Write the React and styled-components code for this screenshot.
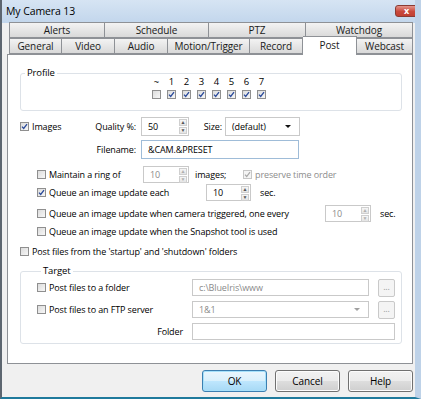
import React from "react";
import styled, { createGlobalStyle } from "styled-components";

const Global = createGlobalStyle`
  html, body { margin: 0; padding: 0; background: #fff; }
  * { box-sizing: border-box; }
  body { font-family: "Open Sans", "Noto Sans", sans-serif; font-size: 9px; letter-spacing: -0.12px; color: #000; }
`;

const Window = styled.div`
  width: 421px;
  height: 399px;
  display: flex;
  flex-direction: column;
  background: #f0f0f0;
  border-left: 2px solid #5d6670;
  border-right: 6px solid #bed2e8;
  border-bottom: 2px solid #1f7a9c;
  overflow: hidden;
`;

const TitleBar = styled.div`
  height: 23px;
  flex: none;
  display: flex;
  align-items: center;
  justify-content: space-between;
  padding: 0 0 1px 4px;
  margin-right: -6px;
  background: linear-gradient(#d6e4f3, #c2d6ec);
  font-size: 10.5px;
  letter-spacing: -0.1px;
`;

const CloseBtn = styled.div`
  width: 23px;
  height: 12px;
  margin-right: 3px;
  border: 1px solid #8a3b33;
  border-radius: 3px;
  background: linear-gradient(#e4948a, #c9493c 55%, #c14032);
  color: #fff;
  font-size: 9px;
  font-weight: bold;
  line-height: 10px;
  text-align: center;
`;

const Body = styled.div`
  flex: 1;
  display: flex;
  flex-direction: column;
  padding: 0 1px 0 5px;
`;

const TabRow = styled.div`
  display: flex;
  height: ${p => p.$h}px;
  padding-left: 2px;
  align-items: flex-end;
  position: relative;
  z-index: ${p => p.$z || 0};
`;

const Tab = styled.div`
  width: ${p => p.$w}px;
  height: ${p => (p.$active ? 19 : 16)}px;
  margin-bottom: ${p => (p.$active ? -1 : 0)}px;
  border: 1px solid #8e9196;
  border-left-width: ${p => (p.$first ? 1 : 0)}px;
  border-bottom: ${p => (p.$active ? "none" : "1px solid #8e9196")};
  background: ${p => (p.$active ? "#fff" : "linear-gradient(#f3f3f3, #e6e6e6 50%, #d9d9d9)")};
  display: flex;
  align-items: center;
  justify-content: center;
  padding-bottom: ${p => (p.$active ? 3 : 0)}px;
  font-size: 10px;
  letter-spacing: -0.1px;
  color: #1a1a1a;
`;

const Panel = styled.div`
  width: 406px;
  height: 310px;
  background: #fff;
  border: 1px solid #8e9196;
  display: flex;
  flex-direction: column;
  padding: 12px 0 0 12px;
`;

const Group = styled.fieldset`
  margin: 0;
  width: 382px;
  border: 1px solid #dde2e8;
  border-radius: 3px;
  padding: ${p => p.$pad};
  min-width: 0;
  height: ${p => p.$h}px;
`;

const Legend = styled.legend`
  padding: 0 2px;
  margin-left: 4px;
  font-size: 9.5px;
  line-height: 12px;
`;

const ProfileGrid = styled.div`
  display: grid;
  grid-template-columns: repeat(8, 15px);
  justify-content: start;
  margin-left: 128px;
  row-gap: 3px;
  margin-top: -3px;
`;

const Num = styled.div`
  text-align: center;
  font-size: 9.5px;
  line-height: 11px;
`;

const CheckCell = styled.div`
  display: flex;
  justify-content: center;
`;

const Box = styled.span`
  width: 9px;
  height: 9px;
  flex: none;
  border: 1px solid ${p => (p.$disabled ? "#c6c6c6" : "#8f8f8f")};
  background: ${p => (p.$disabled ? "#f4f4f4" : "linear-gradient(135deg, #dcdcdc, #f7f7f7)")};
  display: inline-flex;
  align-items: center;
  justify-content: center;
  margin-right: 1px;
`;

const Tick = () => (
  <svg width="7" height="7" viewBox="0 0 7 7">
    <path d="M1 3.6 L2.7 5.5 L6 1.2" fill="none" stroke="#2a4a9a" strokeWidth="1.3" />
  </svg>
);

const TickGray = () => (
  <svg width="7" height="7" viewBox="0 0 7 7">
    <path d="M1 3.6 L2.7 5.5 L6 1.2" fill="none" stroke="#a8a8a8" strokeWidth="1.2" />
  </svg>
);

const Check = ({ on, disabled }) => (
  <Box $disabled={disabled}>{on ? disabled ? <TickGray /> : <Tick /> : null}</Box>
);

const Row = styled.div`
  display: flex;
  align-items: center;
  height: ${p => p.$h}px;
  margin-top: ${p => p.$mt || 0}px;
  padding-left: ${p => p.$pl || 0}px;
`;

const Cell = styled.div`
  width: ${p => p.$w}px;
  flex: none;
  display: flex;
  align-items: center;
  gap: 2px;
  justify-content: ${p => (p.$right ? "flex-end" : "flex-start")};
  color: ${p => (p.$muted ? "#8d8d8d" : "#000")};
  padding-right: ${p => p.$pr || 0}px;
  padding-left: ${p => p.$pl || 0}px;
  white-space: nowrap;
`;

const Field = styled.div`
  width: ${p => p.$w}px;
  height: ${p => p.$h || 19}px;
  flex: none;
  border: 1px solid ${p => (p.$blue ? "#9fbcd8" : "#c9c9c9")};
  background: #fff;
  display: flex;
  align-items: center;
  padding-left: 6px;
  color: ${p => (p.$muted ? "#8a8a8a" : "#000")};
  white-space: nowrap;
`;

const FieldText = styled.span`
  flex: 1;
`;

const Spinner = styled.div`
  width: 9px;
  height: 100%;
  display: flex;
  flex-direction: column;
  gap: 1px;
  padding: 1px 1px 1px 0;
`;

const SpinBtn = styled.div`
  flex: 1;
  border: 1px solid #cfcfcf;
  background: linear-gradient(#f6f6f6, #e4e4e4);
  display: flex;
  align-items: center;
  justify-content: center;
  font-size: 5px;
  color: ${p => (p.$muted ? "#b0b0b0" : "#555")};
  line-height: 1;
`;

const Spin = ({ w, h, value, muted }) => (
  <Field $w={w} $h={h} $muted={muted}>
    <FieldText>{value}</FieldText>
    <Spinner>
      <SpinBtn $muted={muted}>▲</SpinBtn>
      <SpinBtn $muted={muted}>▼</SpinBtn>
    </Spinner>
  </Field>
);

const Caret = styled.span`
  width: 0;
  height: 0;
  margin-right: 8px;
  border-left: 3px solid transparent;
  border-right: 3px solid transparent;
  border-top: 3px solid ${p => (p.$muted ? "#a0a0a0" : "#111")};
`;

const EllBtn = styled.div`
  width: 17px;
  height: 18px;
  flex: none;
  border: 1px solid #c9c9c9;
  border-radius: 2px;
  background: #f4f4f4;
  color: #9a9a9a;
  font-size: 9px;
  display: flex;
  align-items: center;
  justify-content: center;
  padding-bottom: 3px;
  margin-left: 9px;
`;

const Footer = styled.div`
  display: flex;
  justify-content: flex-end;
  gap: 8px;
  padding: 6px 1px 0 0;
`;

const Button = styled.div`
  width: 65px;
  height: 22px;
  border: 1px solid ${p => (p.$default ? "#3c7fb1" : "#707070")};
  border-radius: 3px;
  background: ${p =>
    p.$default
      ? "linear-gradient(#eaf6fd, #d9f0fc 50%, #bee6fd 51%, #a7d9f5)"
      : "linear-gradient(#f2f2f2, #ebebeb 50%, #dddddd 51%, #cfcfcf)"};
  box-shadow: ${p => (p.$default ? "inset 0 0 0 1px #a6e1fb" : "inset 0 0 0 1px #fcfcfc")};
  display: flex;
  align-items: center;
  justify-content: center;
  font-size: 10px;
  letter-spacing: -0.1px;
`;

const row1 = [
  ["Alerts", 96],
  ["Schedule", 104],
  ["PTZ", 97],
  ["Watchdog", 107],
];
const row2 = [
  ["General", 53],
  ["Video", 53],
  ["Audio", 53],
  ["Motion/Trigger", 82],
  ["Record", 53],
  ["Post", 54],
  ["Webcast", 56],
];

export default function App() {
  const profiles = ["~", "1", "2", "3", "4", "5", "6", "7"];
  return (
    <>
      <Global />
      <Window>
        <TitleBar>
          <span>My Camera 13</span>
          <CloseBtn>x</CloseBtn>
        </TitleBar>
        <Body>
          <TabRow $h={15}>
            {row1.map(([t, w], i) => (
              <Tab key={t} $w={w} $first={i === 0}>{t}</Tab>
            ))}
          </TabRow>
          <TabRow $h={16} $z={2}>
            {row2.map(([t, w], i) => (
              <Tab key={t} $w={w} $first={i === 0} $active={t === "Post"}>{t}</Tab>
            ))}
          </TabRow>
          <Panel>
            <Group $h={44} $pad="0 0 0 0">
              <Legend>Profile</Legend>
              <ProfileGrid>
                {profiles.map(p => <Num key={p}>{p}</Num>)}
                {profiles.map((p, i) => (
                  <CheckCell key={p}><Check on={i > 0} /></CheckCell>
                ))}
              </ProfileGrid>
            </Group>

            <Row $h={19} $mt={6}>
              <Cell $w={76}><Check on /> Images</Cell>
              <Cell $w={45} $right $pr={5}>Quality %:</Cell>
              <Spin w={48} value="50" />
              <Cell $w={36} $right $pr={3}>Size:</Cell>
              <Field $w={75} $h={19}>
                <FieldText>(default)</FieldText>
                <Caret />
              </Field>
            </Row>
            <Row $h={19} $mt={4}>
              <Cell $w={76} />
              <Cell $w={45} $right $pr={5}>Filename:</Cell>
              <Field $w={158} $blue>&amp;CAM.&amp;PRESET</Field>
            </Row>

            <Row $h={17} $mt={7} $pl={17}>
              <Cell $w={106}><Check /> Maintain a ring of</Cell>
              <Spin w={46} h={17} value="10" muted />
              <Cell $w={54} $pl={6}>images;</Cell>
              <Cell $w={120} $muted><Check on disabled /> preserve time order</Cell>
            </Row>
            <Row $h={17} $mt={1} $pl={17}>
              <Cell $w={169}><Check on /> Queue an image update each</Cell>
              <Spin w={45} h={17} value="10" />
              <Cell $w={40} $pl={9}>sec.</Cell>
            </Row>
            <Row $h={17} $mt={4} $pl={17}>
              <Cell $w={288}><Check /> Queue an image update when camera triggered, one every</Cell>
              <Spin w={46} h={17} value="10" muted />
              <Cell $w={30} $pl={9}>sec.</Cell>
            </Row>
            <Row $h={14} $mt={2} $pl={17}>
              <Cell $w={300}><Check /> Queue an image update when the Snapshot tool is used</Cell>
            </Row>
            <Row $h={14} $mt={6}>
              <Cell $w={300}><Check /> Post files from the 'startup' and 'shutdown' folders</Cell>
            </Row>

            <Group $h={79} $pad="2px 0 0 16px" style={{ marginTop: 7 }}>
              <Legend>Target</Legend>
              <Row $h={17}>
                <Cell $w={155}><Check /> Post files to a folder</Cell>
                <Field $w={177} $h={17} $muted>c:\BlueIris\www</Field>
                <EllBtn>...</EllBtn>
              </Row>
              <Row $h={17} $mt={5}>
                <Cell $w={155}><Check /> Post files to an FTP server</Cell>
                <Field $w={177} $h={17} $muted>
                  <FieldText>1&amp;1</FieldText>
                  <Caret $muted />
                </Field>
                <EllBtn>...</EllBtn>
              </Row>
              <Row $h={17} $mt={5}>
                <Cell $w={155} $right $pr={9}>Folder</Cell>
                <Field $w={203} $h={17} />
              </Row>
            </Group>
          </Panel>
          <Footer>
            <Button $default>OK</Button>
            <Button>Cancel</Button>
            <Button>Help</Button>
          </Footer>
        </Body>
      </Window>
    </>
  );
}
